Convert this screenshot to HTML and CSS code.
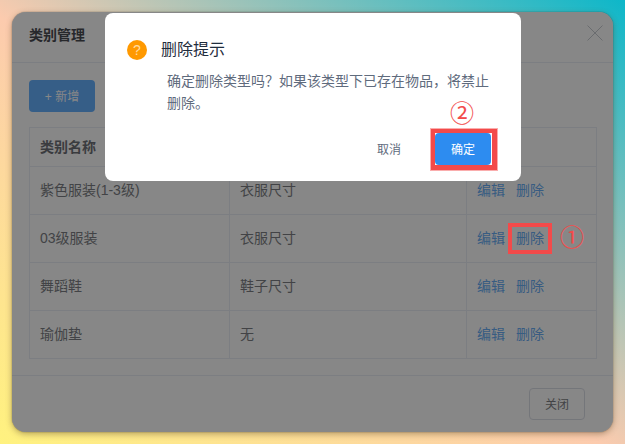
FILE: index.html
```html
<!DOCTYPE html>
<html lang="zh-CN">
<head>
    <meta charset="UTF-8">
    <title>类别管理</title>
    <link rel="stylesheet" href="styles.css">
</head>
<body>

    <div class="window">
        <div class="window-header">
            <span class="window-title">类别管理</span>
            <svg class="window-close" viewBox="0 0 16 16" width="16" height="16">
                <path d="M0.5 0.5L15.5 15.5M15.5 0.5L0.5 15.5" stroke="#c8ccd2" stroke-width="1" fill="none"/>
            </svg>
        </div>

        <div class="window-body">
            <button class="btn-add">+ 新增</button>
            <table class="type-table">
                <thead>
                    <tr><th class="col-name">类别名称</th><th class="col-size"></th><th></th></tr>
                </thead>
                <tbody>
                    <tr>
                        <td>紫色服装(1-3级)</td><td>衣服尺寸</td>
                        <td><a class="link">编辑</a><a class="link">删除</a></td>
                    </tr>
                    <tr>
                        <td>03级服装</td><td>衣服尺寸</td>
                        <td><a class="link">编辑</a><a class="link">删除</a></td>
                    </tr>
                    <tr>
                        <td>舞蹈鞋</td><td>鞋子尺寸</td>
                        <td><a class="link">编辑</a><a class="link">删除</a></td>
                    </tr>
                    <tr>
                        <td>瑜伽垫</td><td>无</td>
                        <td><a class="link">编辑</a><a class="link">删除</a></td>
                    </tr>
                </tbody>
            </table>
        </div>

        <div class="window-footer">
            <button class="btn-close">关闭</button>
        </div>

        <div class="mask"></div>

        <div class="confirm">
            <div class="confirm-title">
                <span class="confirm-icon">?</span>
                <span class="confirm-heading">删除提示</span>
            </div>
            <div class="confirm-text">
                <p>确定删除类型吗？如果该类型下已存在物品，将禁止</p>
                <p>删除。</p>
            </div>
            <div class="confirm-actions">
                <button class="btn-cancel">取消</button>
                <button class="btn-ok">确定</button>
            </div>
        </div>
    </div>

    <div class="mark mark-row"></div>
    <span class="step step-one">①</span>
    <div class="mark mark-ok"></div>
    <span class="step step-two">②</span>

</body>
</html>
```

FILE: styles.css
```css
* {
    box-sizing: border-box;
}

body {
    position: relative;
    margin: 0;
    width: 625px;
    height: 444px;
    padding: 12px;
    overflow: hidden;
    font-family: "Liberation Sans", "Noto Sans CJK SC", sans-serif;
    font-size: 14px;
    background: linear-gradient(to top right, #fff27f 0%, #fccbae 48%, #0db7c9 100%);
}

.window {
    position: relative;
    width: 601px;
    height: 420px;
    border-radius: 14px;
    background: #fff;
    overflow: hidden;
    color: #7d7f85;
    box-shadow: 0 0 1px rgba(0, 0, 0, 0.7), 0 2px 6px rgba(90, 70, 40, 0.45);
}

.window-header {
    display: flex;
    justify-content: space-between;
    align-items: flex-start;
    height: 51px;
    padding: 13px 10px 0 17px;
    border-bottom: 1px solid #ebeef5;
}

.window-title {
    color: #4a4c52;
    font-size: 14px;
    font-weight: bold;
    line-height: 22px;
    margin-top: -1px;
}

.window-body {
    padding: 17px 16px 16px 17px;
}

.btn-add {
    display: block;
    width: 66px;
    height: 32px;
    margin-bottom: 15px;
    padding: 0 0 2px;
    border: none;
    border-radius: 4px;
    background: #66b1ff;
    color: #fff;
    font: inherit;
    font-size: 12px;
}

.type-table {
    width: 568px;
    border-collapse: collapse;
    table-layout: fixed;
}

.type-table th,
.type-table td {
    border: 1px solid #ebeef5;
    padding: 0 10px 3px;
    text-align: left;
}

.type-table th {
    height: 39px;
    color: #6f7177;
    font-weight: bold;
}

.type-table td {
    height: 48px;
}

.col-name {
    width: 200px;
}

.col-size {
    width: 237px;
}

.link {
    color: #6aaef5;
    margin-right: 11px;
}

.window-footer {
    display: flex;
    justify-content: flex-end;
    height: 57px;
    padding: 12px 28px 0 0;
    border-top: 1px solid #ebeef5;
}

.btn-close {
    width: 56px;
    height: 32px;
    padding: 0 0 2px;
    border: 1px solid #dcdfe6;
    border-radius: 4px;
    background: #fff;
    color: #7d7f85;
    font: inherit;
    font-size: 12px;
}

.mask {
    position: absolute;
    inset: 0;
    background: rgba(0, 0, 0, 0.47);
}

.confirm {
    position: absolute;
    left: 93px;
    top: 1px;
    width: 416px;
    height: 168px;
    padding: 26px 22px 0;
    border-radius: 8px;
    background: #fff;
}

.confirm-title {
    display: flex;
    align-items: center;
    gap: 14px;
    height: 22px;
    color: #1f2d3d;
    font-size: 16px;
}

.confirm-heading {
    padding-bottom: 4px;
}

.confirm-icon {
    width: 20px;
    height: 20px;
    border-radius: 50%;
    background: #ff9900;
    color: #ffdca0;
    font-size: 14px;
    line-height: 20px;
    text-align: center;
}

.confirm-text {
    display: flex;
    flex-direction: column;
    align-items: flex-start;
    margin: 9px 0 0 40px;
    color: #5f6b7d;
    font-size: 14px;
    line-height: 22px;
}

.confirm-text p {
    margin: 0;
}

.confirm-actions {
    display: flex;
    justify-content: flex-end;
    align-items: center;
    gap: 18px;
    margin: 19px 8px 0 0;
}

.btn-cancel,
.btn-ok {
    width: 56px;
    height: 32px;
    padding: 0 0 2px;
    border: none;
    border-radius: 4px;
    background: none;
    color: #5f6b7d;
    font: inherit;
    font-size: 12px;
}

.btn-ok {
    background: #2d8cf0;
    color: #fff;
}

.mark {
    position: absolute;
    border: 4px solid #f34a4a;
}

.mark-row {
    left: 508px;
    top: 223px;
    width: 44px;
    height: 31px;
}

.mark-ok {
    left: 431px;
    top: 129px;
    width: 66px;
    height: 41px;
    border-right-width: 5px;
    border-bottom-width: 5px;
    box-shadow: 0 0 0 1px rgba(243, 74, 74, 0.45);
}

.step {
    position: absolute;
    color: #f34a4a;
    font-family: "Noto Sans CJK SC", sans-serif;
    font-size: 24px;
    line-height: 24px;
    -webkit-text-stroke: 0.1px #f34a4a;
}

.step-one {
    left: 560px;
    top: 224px;
}

.step-two {
    left: 450px;
    top: 100px;
}
```
